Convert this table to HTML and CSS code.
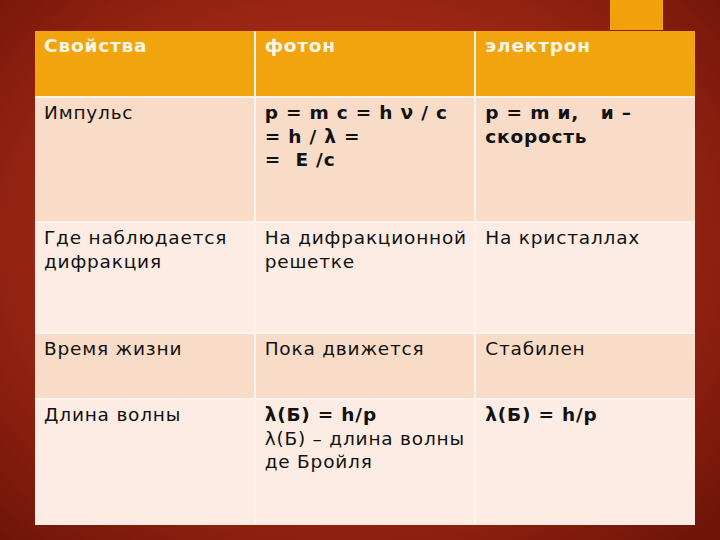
FILE: index.html
```html
<!DOCTYPE html>
<html lang="ru">
<head>
<meta charset="utf-8">
<link rel="stylesheet" href="styles.css">
</head>
<body>
<div class="slide">
  <div class="top">
    <div class="accent"></div>
  </div>
  <div class="grid">
    <div class="cell head">Свойства</div>
    <div class="cell head">фотон</div>
    <div class="cell head">электрон</div>

    <div class="cell dark">Импульс</div>
    <div class="cell dark b">p = m c = h ν / c<br>= h / λ =<br>=&nbsp; E /c</div>
    <div class="cell dark b">p = m и,&nbsp;&nbsp; и –<br>скорость</div>

    <div class="cell light">Где наблюдается<br>дифракция</div>
    <div class="cell light">На дифракционной<br>решетке</div>
    <div class="cell light">На кристаллах</div>

    <div class="cell dark">Время жизни</div>
    <div class="cell dark">Пока движется</div>
    <div class="cell dark">Стабилен</div>

    <div class="cell light">Длина волны</div>
    <div class="cell light"><span class="b">λ(Б) = h/p</span><br>λ(Б) – длина волны<br>де Бройля</div>
    <div class="cell light b">λ(Б) = h/p</div>
  </div>
</div>
</body>
</html>
```

FILE: styles.css
```css
html, body {
  margin: 0;
  padding: 0;
}
body {
  width: 720px;
  height: 540px;
  overflow: hidden;
}
.slide {
  width: 720px;
  height: 540px;
  background:
    radial-gradient(ellipse 70% 75% at 48% 45%, #b5331e 0%, #a62a17 45%, #8c1f0f 75%, #6e1508 100%);
  font-family: "DejaVu Sans", "Noto Sans", sans-serif;
}
.top {
  height: 31px;
  display: flex;
  justify-content: flex-end;
}
.accent {
  width: 53px;
  height: 30px;
  margin-right: 57px;
  background: #f1a20b;
}
.grid {
  margin-left: 35px;
  width: 660px;
  display: grid;
  grid-template-columns: 1fr 1fr 1fr;
  grid-template-rows: 65px 123px 109px 64px 125px;
  gap: 2px;
  background: #fdf3ec;
  font-size: 18.5px;
  line-height: 23.5px;
  color: #111;
}
.cell {
  padding: 3px 6px 3px 9px;
  letter-spacing: 0.8px;
  white-space: nowrap;
}
.head {
  background: #f2a40e;
  color: #fdf6e4;
  font-weight: bold;
}
.dark {
  background: #f9dcc8;
}
.light {
  background: #fcece3;
}
.b {
  font-weight: bold;
}
```
